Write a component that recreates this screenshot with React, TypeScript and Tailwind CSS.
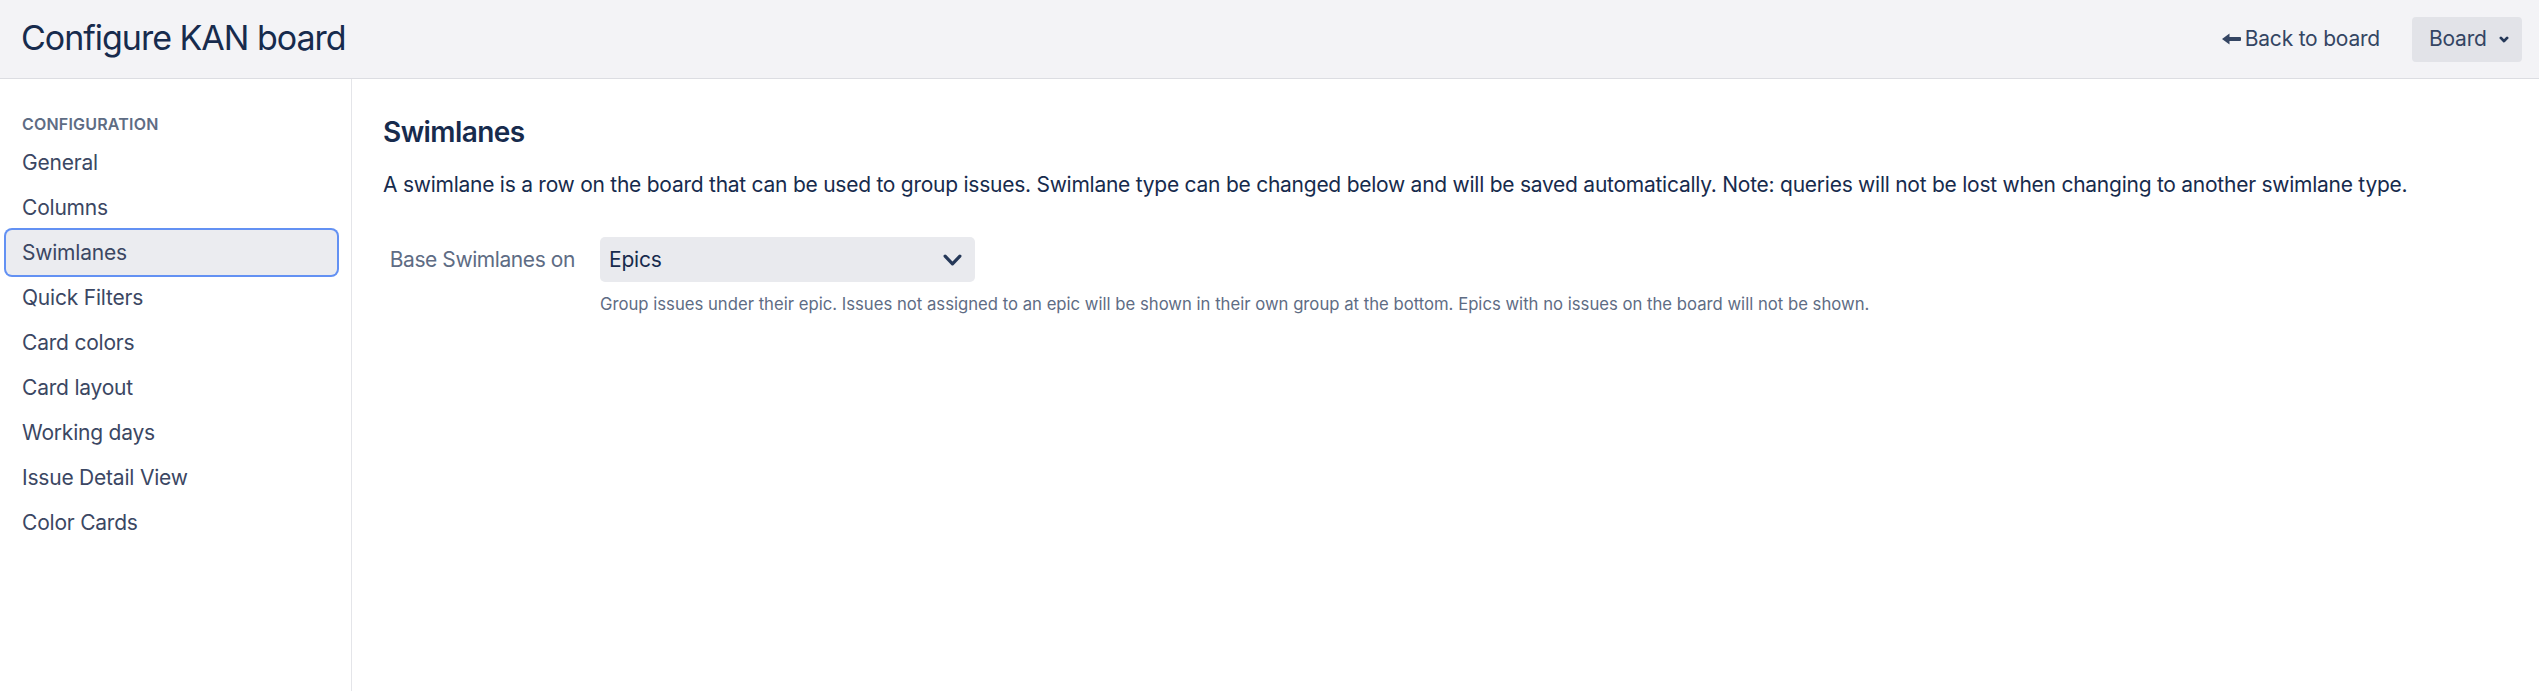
import React from 'react';

const NAV_ITEMS = [
    'General',
    'Columns',
    'Swimlanes',
    'Quick Filters',
    'Card colors',
    'Card layout',
    'Working days',
    'Issue Detail View',
    'Color Cards',
];

const BackArrow = () => (
    <svg width="19" height="12" viewBox="0 0 19 12" className="mr-[4px]">
        <path d="M0 6 L7.5 0.5 L7.5 4 L18 4 Q19 4 19 5 L19 7 Q19 8 18 8 L7.5 8 L7.5 11.5 Z" fill="#344563" />
    </svg>
);

const Chevron = ({ w, h, stroke }: { w: number; h: number; stroke: number }) => (
    <svg width={w} height={h} viewBox={`0 0 ${w} ${h}`}>
        <polyline
            points={`${stroke / 2 + 0.5},${stroke / 2 + 0.5} ${w / 2},${h - stroke / 2 - 0.5} ${w - stroke / 2 - 0.5},${stroke / 2 + 0.5}`}
            fill="none"
            stroke="#253858"
            strokeWidth={stroke}
            strokeLinecap="round"
            strokeLinejoin="round"
        />
    </svg>
);

const Sidebar: React.FC<{ active: string }> = ({ active }) => (
    <aside className="w-[352px] shrink-0 border-r border-[#e4e5e9] pt-[35px]">
        <div className="pl-[22px] text-[16px] leading-[20px] font-semibold tracking-[0.2px] text-[#5e6c84]">CONFIGURATION</div>
        <nav className="mt-[6px] flex flex-col">
            {NAV_ITEMS.map((item) => (
                <div
                    key={item}
                    className={`ml-[6px] w-[331px] h-[45px] flex items-center pl-[16px] text-[21px] tracking-[-0.01em] text-[#3b4763] rounded-[6px] ${
                        item === active ? 'bg-[#ebecf0] ring-2 ring-[#6391f3]' : ''
                    }`}
                >
                    {item}
                </div>
            ))}
        </nav>
    </aside>
);

export default function App() {
    return (
        <div className="w-full h-[691px] bg-white flex flex-col font-['Inter',sans-serif] text-[#172b4d]">
            <header className="h-[79px] shrink-0 bg-[#f3f3f6] border-b border-[#dcdde2] flex items-center justify-between pl-[21px] pr-[17px]">
                <h1 className="text-[34px] leading-none tracking-[-0.03em] text-[#172b4d] -mt-[2px]">Configure KAN board</h1>
                <div className="flex items-center">
                    <a className="flex items-center text-[21px] tracking-[-0.01em] text-[#344563]">
                        <BackArrow />
                        Back to board
                    </a>
                    <button className="ml-[32px] h-[45px] w-[110px] rounded-[4px] bg-[#e2e3e8] flex items-center pl-[17px] text-[21px] tracking-[-0.01em] text-[#344563]">
                        Board
                        <span className="ml-[12px]">
                            <Chevron w={10} h={7} stroke={2.8} />
                        </span>
                    </button>
                </div>
            </header>

            <div className="flex flex-1">
                <Sidebar active="Swimlanes" />

                <main className="flex-1 pl-[31px] pt-[35px]">
                    <h2 className="text-[28px] leading-[36px] font-semibold tracking-[-0.02em] text-[#172b4d]">Swimlanes</h2>
                    <p className="mt-[20px] text-[21px] leading-[30px] tracking-[-0.012em] whitespace-nowrap text-[#172b4d]">
                        A swimlane is a row on the board that can be used to group issues. Swimlane type can be changed below and will be saved automatically. Note: queries will not be lost when changing to another swimlane type.
                    </p>

                    <div className="mt-[37px] flex items-start">
                        <label className="w-[192px] h-[45px] flex items-center justify-end whitespace-nowrap text-[21px] tracking-[-0.02em] text-[#5e6c84]">
                            Base Swimlanes on
                        </label>
                        <div className="ml-[25px]">
                            <div className="w-[375px] h-[45px] rounded-[5px] bg-[#e9eaee] flex items-center justify-between pl-[9px] pr-[13px]">
                                <span className="text-[21px] tracking-[-0.01em] text-[#172b4d]">Epics</span>
                                <Chevron w={19} h={12} stroke={3.2} />
                            </div>
                            <p className="mt-[12px] text-[16.7px] leading-[20px] text-[#5e6c84] whitespace-nowrap">
                                Group issues under their epic. Issues not assigned to an epic will be shown in their own group at the bottom. Epics with no issues on the board will not be shown.
                            </p>
                        </div>
                    </div>
                </main>
            </div>
        </div>
    );
}
